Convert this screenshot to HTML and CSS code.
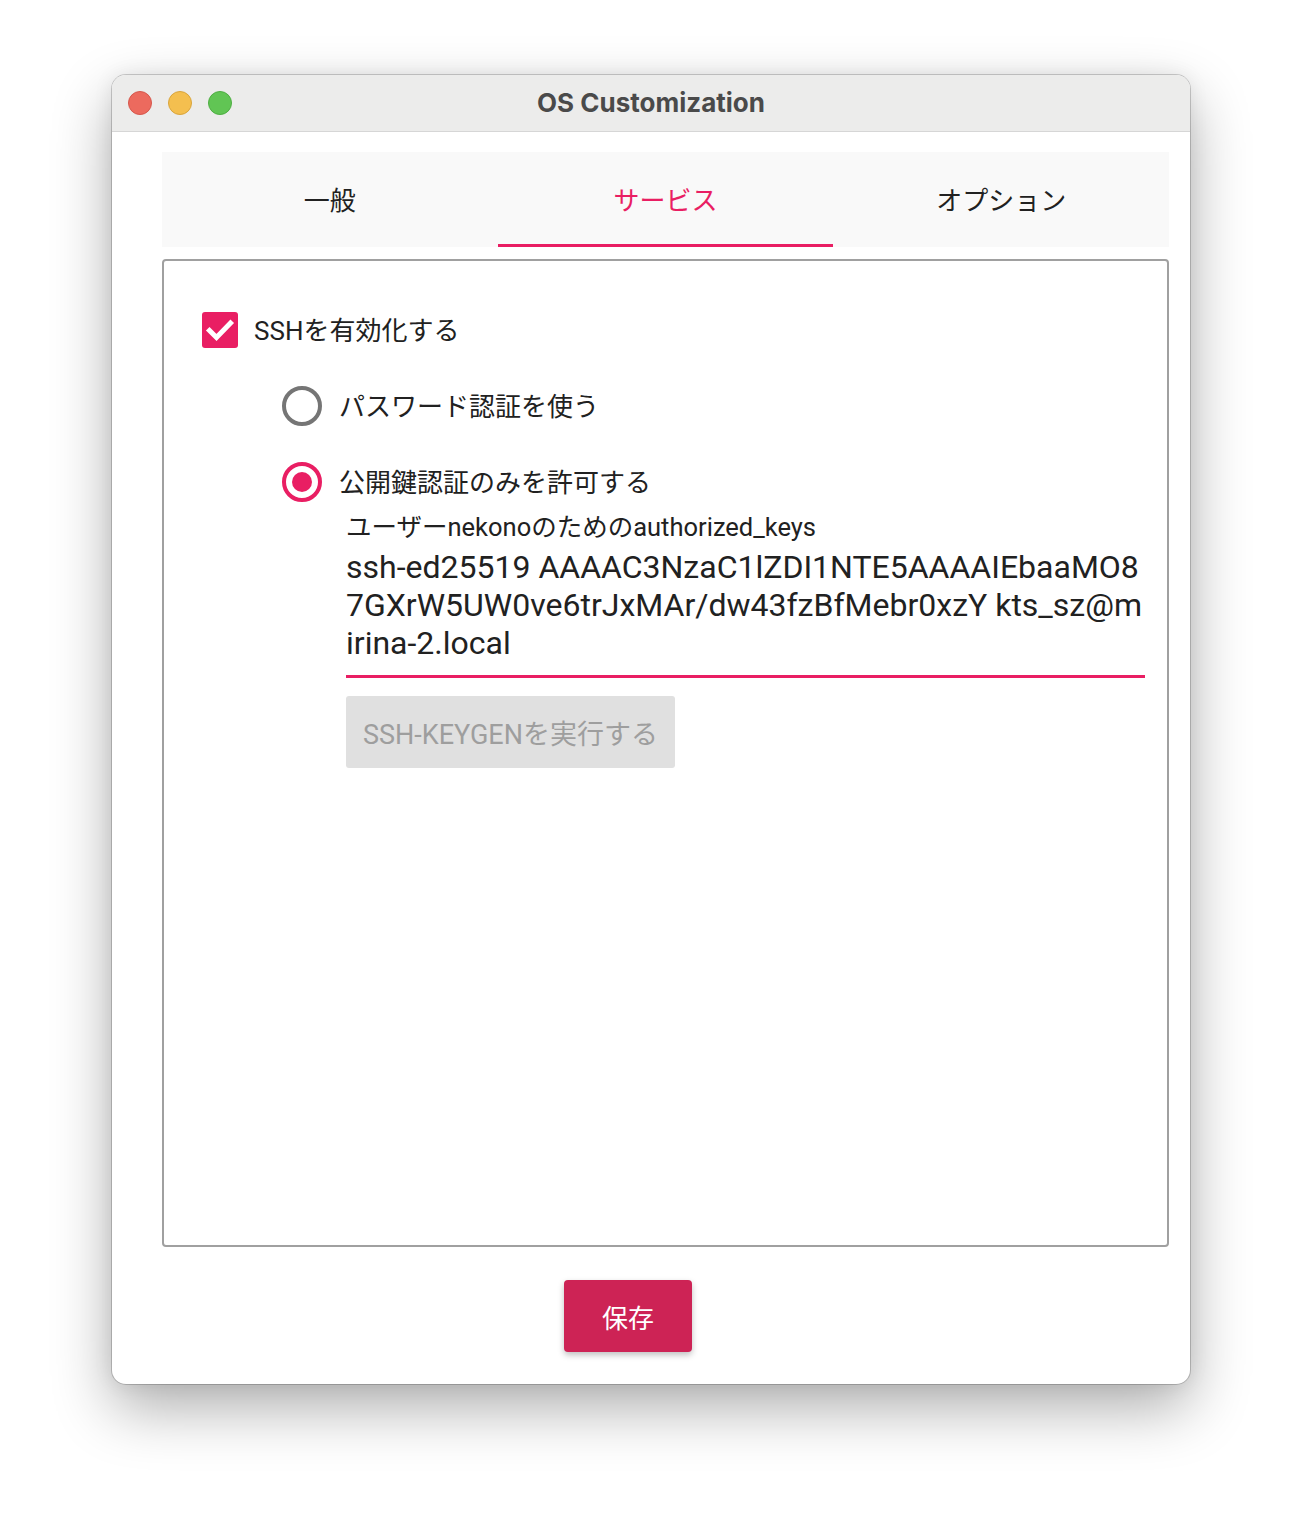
FILE: index.html
```html
<!DOCTYPE html>
<html lang="ja">
<head>
<meta charset="utf-8">
<title>OS Customization</title>
<link rel="stylesheet" href="styles.css">
</head>
<body>
<div class="page">
  <div class="window">
    <div class="titlebar">
      <div class="lights">
        <span class="light red"></span>
        <span class="light yellow"></span>
        <span class="light green"></span>
      </div>
      <div class="title">OS Customization</div>
      <div></div>
    </div>
    <div class="main">
      <div class="tabs">
        <div class="tab">一般</div>
        <div class="tab active">サービス</div>
        <div class="tab">オプション</div>
      </div>
      <div class="box">
        <div class="check-row">
          <span class="checkbox">
            <svg width="36" height="36" viewBox="0 0 36 36"><path d="M7.5 18.5 L14.5 25.5 L28.5 11" fill="none" stroke="#fff" stroke-width="5" stroke-linecap="square"/></svg>
          </span>
          <span class="label">SSHを有効化する</span>
        </div>
        <div class="radios">
          <div class="radio-row">
            <span class="radio"></span>
            <span class="label">パスワード認証を使う</span>
          </div>
          <div class="radio-row">
            <span class="radio on"><span class="dot"></span></span>
            <span class="label">公開鍵認証のみを許可する</span>
          </div>
        </div>
        <div class="keys">
          <div class="keys-label">ユーザーnekonoのためのauthorized_keys</div>
          <div class="keys-field"><span class="ln">ssh-ed25519 AAAAC3NzaC1lZDI1NTE5AAAAIEbaaMO8</span><span class="ln">7GXrW5UW0ve6trJxMAr/dw43fzBfMebr0xzY kts_sz@m</span><span class="ln">irina-2.local</span></div>
          <div class="keygen">SSH-KEYGENを実行する</div>
        </div>
      </div>
      <div class="save">保存</div>
    </div>
  </div>
</div>
</body>
</html>
```
FILE: styles.css
```css
html, body {
  margin: 0;
  background: #ffffff;
}
body {
  font-family: Roboto, "Noto Sans CJK JP", sans-serif;
  color: #212121;
}
.page {
  padding: 75px 0 120px 112px;
}
.window {
  width: 1078px;
  background: #ffffff;
  border-radius: 14px;
  box-shadow: 0 0 0 1px rgba(0,0,0,0.18), 0 24px 60px rgba(0,0,0,0.32), 0 0 20px rgba(0,0,0,0.08);
  overflow: hidden;
}
.titlebar {
  height: 56px;
  border-bottom: 1px solid #d6d6d6;
  background: #ececeb;
  display: grid;
  grid-template-columns: 1fr auto 1fr;
  align-items: center;
}
.lights {
  display: flex;
  gap: 16px;
  padding-left: 16px;
}
.light {
  width: 24px;
  height: 24px;
  border-radius: 50%;
  box-sizing: border-box;
}
.light.red { background: #ec6a5e; border: 1px solid #d6574c; }
.light.yellow { background: #f4bf4f; border: 1px solid #d9a53c; }
.light.green { background: #61c554; border: 1px solid #4eae42; }
.title {
  font-family: Inter, "Noto Sans", sans-serif;
  font-weight: 700;
  font-size: 26px;
  color: #4a4a4a;
  padding-bottom: 2px;
}
.main {
  padding: 20px 21px 32px 50px;
}
.tabs {
  display: grid;
  grid-template-columns: 1fr 1fr 1fr;
  height: 95px;
  background: #f9f9f9;
}
.tab {
  display: flex;
  align-items: center;
  justify-content: center;
  font-size: 26px;
  color: #212121;
  border-bottom: 3px solid transparent;
  padding-top: 1px;
}
.tab.active {
  color: #e91e63;
  border-bottom-color: #e91e63;
}
.box {
  margin-top: 12px;
  height: 988px;
  box-sizing: border-box;
  border: 2px solid #a0a0a0;
  border-radius: 4px;
  padding: 45px 22px 0 38px;
}
.check-row {
  display: flex;
  align-items: center;
  gap: 16px;
  height: 48px;
}
.checkbox {
  width: 36px;
  height: 36px;
  border-radius: 3px;
  background: #e91e63;
  display: block;
}
.checkbox svg { display: block; }
.label {
  font-size: 26px;
  color: #212121;
  padding-bottom: 3px;
}
.radios {
  margin-left: 80px;
}
.radio-row {
  display: flex;
  align-items: center;
  gap: 17px;
  height: 48px;
  margin-top: 28px;
}
.radio {
  width: 40px;
  height: 40px;
  border-radius: 50%;
  border: 4px solid #757575;
  box-sizing: border-box;
  display: flex;
  align-items: center;
  justify-content: center;
}
.radio.on {
  border-color: #e91e63;
}
.dot {
  width: 20px;
  height: 20px;
  border-radius: 50%;
  background: #e91e63;
}
.keys {
  margin-left: 144px;
}
.keys-label {
  margin-top: 7px;
  font-size: 25.5px;
  line-height: 28px;
  color: #212121;
}
.keys-field {
  margin-top: 7px;
  font-size: 32px;
  line-height: 38px;
  color: #212121;
  padding-bottom: 13px;
  border-bottom: 3px solid #e91e63;
}
.ln {
  display: block;
  white-space: nowrap;
}
.keygen {
  margin-top: 18px;
  display: inline-flex;
  align-items: center;
  height: 72px;
  padding: 0 17px;
  background: #e0e0e0;
  color: #9e9e9e;
  font-size: 27px;
  border-radius: 3px;
}
.save {
  margin: 33px 0 0 402px;
  width: 128px;
  height: 72px;
  display: flex;
  align-items: center;
  justify-content: center;
  background: #cd2355;
  color: #ffffff;
  font-size: 26px;
  border-radius: 4px;
  box-shadow: 0 3px 6px rgba(0,0,0,0.25);
}
```
